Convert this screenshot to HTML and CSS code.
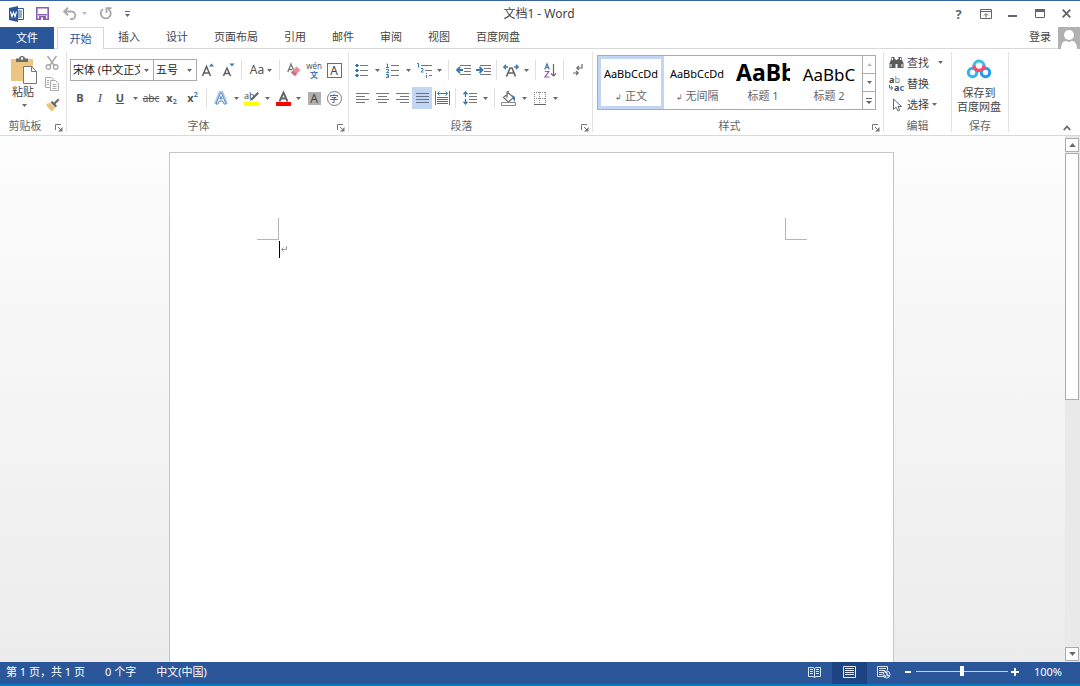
FILE: index.html
```html
<!DOCTYPE html>
<html lang="zh-CN">
<head>
<meta charset="utf-8">
<title>文档1 - Word</title>
<link rel="stylesheet" href="styles.css">
</head>
<body>
<svg class="defs" aria-hidden="true">
  <symbol id="caret" viewBox="0 0 5 3"><path d="M0 0h5L2.500 3z" fill="#6a6a6a"/></symbol>
  <symbol id="launcher" viewBox="0 0 8 8"><path d="M.5 6V.5H6M3 3l3 3" fill="none" stroke="#777"/><path d="M7.500 3v4.500H3z" fill="#777"/></symbol>
</svg>
<div class="app">
  <header class="titlebar">
    <div class="quick">
      <svg width="16" height="16" viewBox="0 0 16 16"><path d="M8 2.500h6.500v11H8z" fill="#fff" stroke="#2b579a"/><path d="M9 5h4M9 7h4M9 9h4M9 11h4" stroke="#2b579a"/><path d="M0 2l9-2v16l-9-2z" fill="#2b579a"/><path d="M1.500 5.500L3 10.500l1.500-4 1.500 4 1.500-5" fill="none" stroke="#fff" stroke-width="1.200"/></svg>
      <button class="qbtn save" aria-label="保存"><svg width="13" height="13" viewBox="0 0 13 13"><path d="M.8.8h11.400v11.400H.8z" fill="#fff" stroke="#8a5bb0" stroke-width="1.600"/><path d="M2 7h9v1.500H2zM3 9h7v4H3z" fill="#8a5bb0"/><path d="M5 10.500h2V13H5z" fill="#fff"/></svg></button>
      <button class="qbtn undo" aria-label="撤消"><svg width="14" height="13" viewBox="0 0 14 13"><path d="M1 4.500h7.500a3.800 3.800 0 0 1 0 7.600H7M5 .8L1.200 4.500 5 8.200" fill="none" stroke="#aaa" stroke-width="1.900"/></svg></button>
      <button class="qbtn drop dim" aria-label="撤消选项"><svg class="caret"><use href="#caret"/></svg></button>
      <button class="qbtn redo" aria-label="重复"><svg width="13" height="13" viewBox="0 0 13 13"><path d="M4 2.200A5 5 0 1 0 9.200 2M7.500 6V1.200h5" fill="none" stroke="#a6a6a6" stroke-width="1.800"/></svg></button>
      <button class="qbtn more" aria-label="自定义快速访问工具栏"><svg width="5" height="6" viewBox="0 0 5 6"><path d="M0 .5h5" stroke="#666"/><path d="M0 3h5L2.500 6z" fill="#666"/></svg></button>
    </div>
    <h1 class="doc-title">文档1 - Word</h1>
    <div class="window-controls">
      <button aria-label="帮助" class="help">?</button>
      <button aria-label="功能区显示选项"><svg width="12" height="10" viewBox="0 0 12 10"><path d="M.5.5h11v9H.5zM0 2.500h12M6 8.500V5M4 6.500l2-2 2 2" fill="none" stroke="#666"/></svg></button>
      <button aria-label="最小化"><svg width="9" height="10" viewBox="0 0 9 10"><path d="M0 7h9" stroke="#666" stroke-width="2"/></svg></button>
      <button aria-label="最大化"><svg width="10" height="9" viewBox="0 0 10 9"><path d="M.5.5h9v8h-9z" fill="none" stroke="#666"/><path d="M0 1.500h10" stroke="#666" stroke-width="3"/></svg></button>
      <button aria-label="关闭"><svg width="9" height="9" viewBox="0 0 9 9"><path d="M.7.7l7.600 7.600M8.300.7L.7 8.300" stroke="#666" stroke-width="1.900"/></svg></button>
    </div>
  </header>

  <nav class="tabs">
    <button class="tab file">文件</button>
    <button class="tab active">开始</button>
    <button class="tab">插入</button>
    <button class="tab">设计</button>
    <button class="tab">页面布局</button>
    <button class="tab">引用</button>
    <button class="tab">邮件</button>
    <button class="tab">审阅</button>
    <button class="tab">视图</button>
    <button class="tab">百度网盘</button>
    <a class="login" href="#">登录</a>
    <svg class="avatar" width="22" height="22" viewBox="0 0 22 22"><path d="M0 0h22v22H0z" fill="#b1b1b1"/><circle cx="11" cy="8" r="5" fill="#fff"/><path d="M3 22c0-5 2-8 5-8l3 1 3-1c3 0 5 3 5 8z" fill="#fff"/></svg>
  </nav>

  <section class="ribbon">
    <div class="group clipboard">
      <div class="clip-body">
        <button class="paste"><svg width="28" height="28" viewBox="0 0 28 28"><path d="M1 3h22v22H1z" fill="#ecc583"/><path d="M6 6V2.500h3C9 1 10 0 12 0s3 1 3 2.500h3V6z" fill="#6b6b6b"/><circle cx="12" cy="2.500" r="1.200" fill="#fff"/><path d="M13.500 10.500h8l5 5v12h-13z" fill="#fff" stroke="#777"/><path d="M21.500 10.500v5h5" fill="none" stroke="#777"/></svg><span>粘贴</span><svg class="caret"><use href="#caret"/></svg></button>
        <div class="clip-tools">
          <button class="tool" aria-label="剪切"><svg width="14" height="14" viewBox="0 0 14 14"><path d="M2.500 0l6.800 9.500M11.500 0L4.700 9.500" stroke="#aaa" stroke-width="1.500"/><g fill="none" stroke="#aaa" stroke-width="1.400"><circle cx="3.300" cy="11" r="2.200"/><circle cx="10.700" cy="11" r="2.200"/></g></svg></button>
          <button class="tool" aria-label="复制"><svg width="14" height="14" viewBox="0 0 14 14"><g fill="#fff" stroke="#aaa"><path d="M.5.5h6l2 2v8h-8z"/><path d="M5.500 3.500h5l3 3v7h-8z"/></g><path d="M2 3.500h2M2 5.500h2M2 7.500h2M7.500 7.500h4M7.500 9.500h4M7.500 11.500h4" stroke="#aaa"/></svg></button>
          <button class="tool" aria-label="格式刷"><svg width="15" height="14" viewBox="0 0 15 14"><path d="M1 6l4-1 5 5-3 3.500C5 12 2 9 1 6z" fill="#efc27a"/><path d="M5.500 4.500l5 5 1.500-1.500-1.500-2L14.500 2 13 .5 9 4.500 7 3z" fill="#6b6b6b"/></svg></button>
        </div>
      </div>
      <div class="caption"><span>剪贴板</span><button class="launch" aria-label="剪贴板选项"><svg width="8" height="8"><use href="#launcher"/></svg></button></div>
    </div>

    <div class="group font">
      <div class="row">
        <label class="combo name"><select aria-label="字体"><option>宋体 (中文正文)</option></select><span class="arrow"><svg class="caret"><use href="#caret"/></svg></span></label>
        <label class="combo size"><select aria-label="字号"><option>五号</option></select><span class="arrow"><svg class="caret"><use href="#caret"/></svg></span></label>
        <button class="tool glyph" aria-label="增大字号"><svg width="14" height="14" viewBox="0 0 14 14"><path d="M1.500 13L5.500 3.500 9.500 13M3 10h5" fill="none" stroke="#606060" stroke-width="1.500"/><path d="M8 3.500L10.500.5 13 3.500z" fill="#3a78b5"/></svg></button>
        <button class="tool glyph" aria-label="减小字号"><svg width="14" height="14" viewBox="0 0 14 14"><path d="M2.500 13L6 5l3.500 8M4 10.500h4" fill="none" stroke="#606060" stroke-width="1.500"/><path d="M8.500.5h5L11 3.500z" fill="#3a78b5"/></svg></button>
        <i class="sep"></i>
        <button class="tool case">Aa<svg class="caret"><use href="#caret"/></svg></button>
        <i class="sep"></i>
        <button class="tool" aria-label="清除格式"><svg width="14" height="14" viewBox="0 0 14 14"><path d="M.8 9L4 1l2.500 6M2 6.500h3" fill="none" stroke="#777" stroke-width="1.300"/><path d="M9.500 3.500l4 3.500-5.500 6-4-3.500z" fill="#e58f9e"/><path d="M4 9.500l2-2 4 3.500-2 2z" fill="#d9667d"/></svg></button>
        <button class="tool pinyin" aria-label="拼音指南"><span>wén</span><b>文</b></button>
        <button class="tool" aria-label="字符边框"><span class="boxed">A</span></button>
      </div>
      <div class="row">
        <button class="tool bold">B</button><button class="tool italic">I</button><button class="tool under">U</button><button class="drop" aria-label="下划线选项"><svg class="caret"><use href="#caret"/></svg></button>
        <button class="tool strike">abc</button><button class="tool script">x<sub>2</sub></button><button class="tool script">x<sup>2</sup></button>
        <i class="sep"></i>
        <button class="tool" aria-label="文本效果"><svg width="14" height="14" viewBox="0 0 14 14"><path d="M1.500 13L6 1.500h2L12.500 13M4 9h6" fill="none" stroke="#a9c8e8" stroke-width="3"/><path d="M2 13L6.500 2h1L12 13h-2L8.700 10H5.300L4 13zM5.900 8h2.200L7 5.300z" fill="#fff" stroke="#4682bd" stroke-width=".9"/></svg></button><button class="drop" aria-label="文本效果选项"><svg class="caret"><use href="#caret"/></svg></button>
        <button class="tool" aria-label="突出显示"><svg width="16" height="15" viewBox="0 0 16 15"><path d="M0 11h15v4H0z" fill="#ff0"/><text x="0" y="8" class="tiny-ab">ab</text><path d="M13.500 1l1.500 1.500L8.500 9 6 10l1-2.500z" fill="#666"/></svg></button><button class="drop" aria-label="突出显示选项"><svg class="caret"><use href="#caret"/></svg></button>
        <button class="tool" aria-label="字体颜色"><svg width="15" height="15" viewBox="0 0 15 15"><path d="M0 11h15v4H0z" fill="#f00"/><path d="M3.500 10.500L7.500 1.500l4 9M5 7.500h5" fill="none" stroke="#666" stroke-width="1.900"/></svg></button><button class="drop" aria-label="字体颜色选项"><svg class="caret"><use href="#caret"/></svg></button>
        <button class="tool" aria-label="字符底纹"><span class="shaded">A</span></button>
        <button class="tool" aria-label="带圈字符"><span class="ringed">字</span></button>
      </div>
      <div class="caption"><span>字体</span><button class="launch" aria-label="字体选项"><svg width="8" height="8"><use href="#launcher"/></svg></button></div>
    </div>

    <div class="group para">
      <div class="row">
        <button class="tool" aria-label="项目符号"><svg width="14" height="14" viewBox="0 0 14 14"><path d="M5 2.500h8M5 7.500h8M5 12.500h8" stroke="#777"/><path d="M1 1h2v3H1zM1 6h2v3H1zM1 11h2v3H1zM0 2h4v1H0zM0 7h4v1H0zM0 12h4v1H0z" fill="#3a78b5"/></svg></button><button class="drop" aria-label="项目符号选项"><svg class="caret"><use href="#caret"/></svg></button>
        <button class="tool" aria-label="编号"><svg width="14" height="15" viewBox="0 0 14 15"><path d="M5 2.500h8M5 7.500h8M5 12.500h8" stroke="#777"/><path d="M.5 1h1v3M0 4.500h3M0 6.500h2.500V8L.5 9.500H3M0 11.500h2.500v3H0M1 13h1.500" fill="none" stroke="#3a78b5"/></svg></button><button class="drop" aria-label="编号选项"><svg class="caret"><use href="#caret"/></svg></button>
        <button class="tool" aria-label="多级列表"><svg width="15" height="15" viewBox="0 0 15 15"><path d="M4 2.500h11M8 7.500h7M12 12.500h3" stroke="#777"/><path d="M0 .5h1.500v4M4 5.500h2v1.500L4 9h2.500M9.500 10v1M9.500 12v3" fill="none" stroke="#3a78b5"/></svg></button><button class="drop" aria-label="多级列表选项"><svg class="caret"><use href="#caret"/></svg></button>
        <i class="sep"></i>
        <button class="tool" aria-label="减少缩进量"><svg width="15" height="10" viewBox="0 0 15 10"><path d="M4 .5h11M8 3.500h7M8 6.500h7M4 9.500h11" stroke="#777"/><path d="M7 5H1.500M4 2L1 5l3 3" fill="none" stroke="#3a78b5" stroke-width="1.800"/></svg></button>
        <button class="tool" aria-label="增加缩进量"><svg width="15" height="10" viewBox="0 0 15 10"><path d="M4 .5h11M8 3.500h7M8 6.500h7M4 9.500h11" stroke="#777"/><path d="M0 5h6M3.500 2l3 3-3 3" fill="none" stroke="#3a78b5" stroke-width="1.800"/></svg></button>
        <i class="sep"></i>
        <button class="tool" aria-label="中文版式"><svg width="16" height="13" viewBox="0 0 16 13"><path d="M3.500 12.500L7 4h2l3.500 8.500M5 9h6" fill="none" stroke="#666" stroke-width="1.700"/><path d="M1 3h4M11 3h4M3 .8L.8 3 3 5.200M13 .8L15.200 3 13 5.200" fill="none" stroke="#3a78b5" stroke-width="1.300"/></svg></button><button class="drop" aria-label="中文版式选项"><svg class="caret"><use href="#caret"/></svg></button>
        <i class="sep"></i>
        <button class="tool" aria-label="排序"><svg width="13" height="15" viewBox="0 0 13 15"><path d="M.8 6.500L3 .8l2.200 5.700M1.500 4.500h3" fill="none" stroke="#3a78b5" stroke-width="1.200"/><path d="M.8 8.500h4L1 14h4.500" fill="none" stroke="#8a5bb0" stroke-width="1.200"/><path d="M9.500 1v12M7 10.500L9.500 13l2.500-2.500" fill="none" stroke="#666" stroke-width="1.200"/></svg></button>
        <i class="sep"></i>
        <button class="tool" aria-label="显示编辑标记"><svg width="10" height="12" viewBox="0 0 10 12"><path d="M9 0v4H4M6 1.800L3.800 4 6 6.200M0 9h5M3 6.800L5.200 9 3 11.200" fill="none" stroke="#666" stroke-width="1.200"/></svg></button>
      </div>
      <div class="row">
        <button class="tool" aria-label="左对齐"><svg width="13" height="10" viewBox="0 0 13 10"><path d="M0 .5h13M0 3.500h9M0 6.500h13M0 9.500h9" stroke="#777"/></svg></button>
        <button class="tool" aria-label="居中"><svg width="13" height="10" viewBox="0 0 13 10"><path d="M0 .5h13M2 3.500h9M0 6.500h13M2 9.500h9" stroke="#777"/></svg></button>
        <button class="tool" aria-label="右对齐"><svg width="13" height="10" viewBox="0 0 13 10"><path d="M0 .5h13M4 3.500h9M0 6.500h13M4 9.500h9" stroke="#777"/></svg></button>
        <button class="tool on" aria-label="两端对齐"><svg width="13" height="10" viewBox="0 0 13 10"><path d="M0 .5h13M0 3.500h13M0 6.500h13M0 9.500h13" stroke="#677187"/></svg></button>
        <button class="tool" aria-label="分散对齐"><svg width="15" height="14" viewBox="0 0 15 14"><path d="M.5 0v14M14.500 0v14M2.500 2.500h10M4.500.5l-2 2 2 2M10.500.5l2 2-2 2" fill="none" stroke="#3a78b5"/><path d="M2 6.500h11M2 8.500h11M2 10.500h11M2 12.500h11" stroke="#666"/></svg></button>
        <i class="sep"></i>
        <button class="tool" aria-label="行距"><svg width="14" height="14" viewBox="0 0 14 14"><path d="M6 2.500h8M6 5.500h8M6 8.500h8M6 11.500h8" stroke="#777"/><path d="M2.500 1v5M2.500 8v5M.5 3.200l2-2.200 2 2.200M.5 10.800l2 2.200 2-2.200" fill="none" stroke="#3a78b5" stroke-width="1.300"/></svg></button><button class="drop" aria-label="行距选项"><svg class="caret"><use href="#caret"/></svg></button>
        <i class="sep"></i>
        <button class="tool" aria-label="底纹"><svg width="16" height="15" viewBox="0 0 16 15"><path d="M2.500 6.500l5-4.500 5 4.500L7.500 11zM6 7V1.500q0-1 1-1h1" fill="#fff" stroke="#666" stroke-width="1.100"/><path d="M11 4l3 2v5l-2-3z" fill="#3a78b5"/><path d="M.5 11.500h14v3H.5z" fill="#fff" stroke="#888"/></svg></button><button class="drop" aria-label="底纹选项"><svg class="caret"><use href="#caret"/></svg></button>
        <button class="tool" aria-label="边框"><svg width="12" height="13" viewBox="0 0 12 13"><path d="M.5 0v12M11.500 0v12M5.500 0v12M0 .5h12M0 6.500h12" stroke="#888" stroke-dasharray="1 1"/><path d="M0 12.500h12" stroke="#666"/></svg></button><button class="drop" aria-label="边框选项"><svg class="caret"><use href="#caret"/></svg></button>
      </div>
      <div class="caption"><span>段落</span><button class="launch" aria-label="段落选项"><svg width="8" height="8"><use href="#launcher"/></svg></button></div>
    </div>

    <div class="group styles">
      <div class="gallery">
        <button class="style chosen"><span class="sample">AaBbCcDd</span><span class="sname"><small>↲</small> 正文</span></button>
        <button class="style"><span class="sample">AaBbCcDd</span><span class="sname"><small>↲</small> 无间隔</span></button>
        <button class="style"><span class="sample h1">AaBb</span><span class="sname">标题 1</span></button>
        <button class="style"><span class="sample h2">AaBbC</span><span class="sname">标题 2</span></button>
        <div class="gallery-nav">
          <button aria-label="上一行" class="dim"><svg class="caret flip"><use href="#caret"/></svg></button>
          <button aria-label="下一行"><svg class="caret"><use href="#caret"/></svg></button>
          <button aria-label="其他"><svg width="6" height="6" viewBox="0 0 6 6"><path d="M0 .5h6" stroke="#666"/><path d="M0 3h6L3 6z" fill="#666"/></svg></button>
        </div>
      </div>
      <div class="caption"><span>样式</span><button class="launch" aria-label="样式选项"><svg width="8" height="8"><use href="#launcher"/></svg></button></div>
    </div>

    <div class="group edit">
      <div class="edit-list">
        <button><svg width="14" height="13" viewBox="0 0 14 13"><path d="M2 1h3v2h1v9H0V7l2-4zM9 1h3v2l2 4v5H8V3h1zM6 4h2v4H6z" fill="#5c5c5c"/><path d="M1.500 8v3M12.500 8v3M3 2v2M11 2v2" stroke="#fff"/></svg><span>查找</span><svg class="caret far"><use href="#caret"/></svg></button>
        <button><svg width="15" height="16" viewBox="0 0 15 16"><text x="0" y="7" class="rep"><tspan class="dark">a</tspan>b</text><text x="5" y="15" class="rep"><tspan class="dark">a</tspan><tspan class="blue">c</tspan></text><path d="M.5 9v3h3M2 10l1.500 2L2 14" fill="none" stroke="#3a78b5"/></svg><span>替换</span></button>
        <button><svg width="14" height="14" viewBox="0 0 14 14"><path d="M4 1v10.500l2.500-2.300L8.500 13l1.700-.8L8.500 8.500H12z" fill="#fff" stroke="#666"/></svg><span>选择</span><svg class="caret"><use href="#caret"/></svg></button>
      </div>
      <div class="caption"><span>编辑</span></div>
    </div>

    <div class="group cloud">
      <button class="cloud-btn"><svg width="26" height="20" viewBox="0 0 26 20"><g fill="none" stroke-width="3"><circle cx="6.500" cy="13.500" r="4.200" stroke="#2bb5ee"/><circle cx="19.500" cy="13.500" r="4.200" stroke="#1f9cf0"/><path d="M8 7a5 5 0 1 1 10 0" stroke="#36bdf2"/><path d="M8 6.500a5 5 0 0 0 10 0" stroke="#f2506e" stroke-width="3.600"/></g></svg><span>保存到<br>百度网盘</span></button>
      <div class="caption"><span>保存</span></div>
    </div>
    <button class="collapse" aria-label="折叠功能区"><svg width="8" height="6" viewBox="0 0 8 6"><path d="M.8 5L4 1.500 7.200 5" fill="none" stroke="#666" stroke-width="1.800"/></svg></button>
  </section>

  <main class="workspace">
    <div class="canvas">
      <article class="page">
        <div class="corners"><i class="corner left"></i><i class="corner right"></i></div>
        <div class="line"><i class="cursor"></i><svg width="7" height="8" viewBox="0 0 7 8"><path d="M6.500 0v3.500H1.500M3.500 1.500l-2 2 2 2" fill="none" stroke="#999"/></svg></div>
      </article>
    </div>
    <div class="scrollbar">
      <button aria-label="向上滚动"><svg class="caret flip big"><use href="#caret"/></svg></button>
      <div class="track"><div class="thumb"></div></div>
      <button aria-label="向下滚动"><svg class="caret big"><use href="#caret"/></svg></button>
    </div>
  </main>

  <footer class="status">
    <span>第 1 页，共 1 页</span><span>0 个字</span><span>中文(中国)</span>
    <div class="views">
      <button aria-label="阅读视图"><svg width="13" height="12" viewBox="0 0 13 12"><path d="M.5 1.500h4.500l1.500 1 1.500-1h4.500v9H8l-1.500 1-1.500-1H.5zM6.500 2v9M2 3.500h3M2 5.500h3M2 7.500h3M8 3.500h3M8 5.500h3M8 7.500h3" fill="none" stroke="#dbe4f1"/></svg></button>
      <button class="current" aria-label="页面视图"><svg width="13" height="12" viewBox="0 0 13 12"><path d="M.5.5h12v11H.5zM2 2.500h9M2 4.500h9M2 6.500h9M2 8.500h9" fill="none" stroke="#e6ecf5"/></svg></button>
      <button aria-label="Web 版式视图"><svg width="14" height="13" viewBox="0 0 14 13"><path d="M6 10.500H.5V.5h10v4M2 2.500h7M2 4.500h6M2 6.500h4M2 8.500h3" fill="none" stroke="#dbe4f1"/><circle cx="9.500" cy="8.500" r="3.500" fill="#2b579a" stroke="#dbe4f1"/><path d="M8 6l2 1v2l2 1M7 9l2 2" fill="none" stroke="#dbe4f1" stroke-width="1.400"/></svg></button>
    </div>
    <button class="zoom-step" aria-label="缩小"><svg width="7" height="8" viewBox="0 0 7 8"><path d="M0 4h6" stroke="#fff" stroke-width="2"/></svg></button>
    <input class="zoom" type="range" min="0" max="100" value="50" aria-label="缩放">
    <button class="zoom-step" aria-label="放大"><svg width="8" height="8" viewBox="0 0 8 8"><path d="M0 4h8M4 0v8" stroke="#fff" stroke-width="2"/></svg></button>
    <button class="percent">100%</button>
  </footer>
</div>
</body>
</html>
```
FILE: styles.css
```css
* { box-sizing: border-box; }
body {
  margin: 0;
  font: 11px/16px "Noto Sans", "Noto Sans CJK SC", sans-serif;
  color: #444;
  background: #fff;
}
button, select {
  margin: 0;
  padding: 0;
  border: 0;
  background: none;
  font: inherit;
  color: inherit;
}
button { display: flex; align-items: center; justify-content: center; white-space: nowrap; }
svg { display: block; flex: none; overflow: visible; }
.defs { position: absolute; width: 0; height: 0; }
.caret { width: 5px; height: 3px; }
.caret.big { width: 7px; height: 4px; }
.flip { transform: rotate(180deg); }
.dim { opacity: .45; }
.app { display: flex; flex-direction: column; height: 100vh; overflow: hidden; }

.titlebar {
  display: grid;
  grid-template-columns: 1fr auto 1fr;
  align-items: center;
  height: 27px;
  padding-bottom: 1px;
  border-top: 1px solid #3a63a5;
}
.quick { display: flex; align-items: center; padding-left: 9px; }
.qbtn { height: 20px; }
.save { margin-left: 11px; }
.undo { margin-left: 14px; }
.quick .drop { width: 12px; margin-left: 1px; }
.redo { margin-left: 9px; }
.more { margin-left: 13px; }
.doc-title { margin: 0; padding-right: 2px; font-size: 12px; font-weight: 400; }
.window-controls { display: flex; justify-content: flex-end; }
.window-controls button { width: 27px; height: 24px; }
.window-controls .help { font-size: 13px; font-weight: 700; color: #666; }

.tabs { display: flex; height: 22px; border-bottom: 1px solid #dadada; }
.tab { padding: 0 13px; height: 20px; }
.file { width: 54px; height: 22px; background: #2b579a; color: #fff; }
.active {
  width: 47px;
  height: 22px;
  margin: 0 1px 0 3px;
  padding: 0;
  border: 1px solid #d5d5d5;
  border-bottom: 0;
  background: #fff;
  color: #2b579a;
}
.login { margin-left: auto; margin-right: 7px; line-height: 19px; color: #444; text-decoration: none; }

.ribbon { display: flex; height: 87px; border-bottom: 1px solid #d9d9d9; }
.group {
  position: relative;
  display: flex;
  flex-direction: column;
  margin: 3px 0;
  border-right: 1px solid #e3e3e3;
}
.caption {
  display: flex;
  justify-content: center;
  margin-top: auto;
  line-height: 13px;
  color: #666;
}
.launch { position: absolute; right: 3px; bottom: -1px; width: 9px; height: 10px; }
.tool { width: 20px; height: 22px; color: #555; }
.drop { width: 11px; height: 22px; }
.row { display: flex; align-items: center; height: 22px; }
.row + .row { margin-top: 6px; }
.sep { width: 1px; height: 20px; margin: 0 4px 0 3px; background: #e1e1e1; }
.on { background: #c2d5f2; }

.clipboard { width: 67px; }
.clip-body { display: flex; align-items: flex-start; }
.paste { flex-direction: column; width: 40px; margin-left: 4px; padding: 4px 0 0; color: #444; }
.paste span { margin: 0 2px 4px 0; }
.clip-tools { display: flex; flex-direction: column; margin-left: -2px; }
.clip-tools .tool { height: 21px; }
.clipboard .caption { padding-right: 16px; }

.font { width: 282px; padding-left: 3px; }
.font .row:first-child, .para .row:first-child { margin-top: 7px; }
.font .caption, .para .caption { padding-right: 21px; }
.combo { position: relative; display: flex; height: 22px; border: 1px solid #ababab; }
.combo.name { width: 84px; }
.combo.size { width: 44px; margin: 0 1px 0 -1px; }
.combo select { flex: 1; min-width: 0; padding-left: 2px; appearance: none; color: #222; }
.arrow {
  position: absolute;
  top: 0;
  right: 0;
  display: flex;
  align-items: center;
  justify-content: center;
  width: 13px;
  height: 100%;
  background: #fff;
  pointer-events: none;
}
.case { width: 30px; gap: 3px; font-size: 12px; }
.pinyin { flex-direction: column; font-size: 8px; line-height: 9px; }
.pinyin b { font-size: 8px; color: #3a78b5; }
.boxed, .shaded, .ringed { display: block; text-align: center; color: #444; }
.boxed { width: 15px; height: 15px; border: 1px solid #3a78b5; font-size: 12px; line-height: 13px; }
.shaded { width: 13px; height: 13px; background: #b0b0b0; font-size: 12px; line-height: 13px; }
.ringed { width: 15px; height: 15px; border: 1px solid #777; border-radius: 50%; font-size: 9px; line-height: 13px; }
.bold { font-weight: 700; }
.italic { font: italic 13px "Liberation Serif", serif; }
.under { font-weight: 700; text-decoration: underline; }
.strike { font-size: 10px; text-decoration: line-through; }
.script { width: 21px; font-weight: 700; }
.script sub, .script sup { font-size: 7px; line-height: 7px; color: #3a78b5; }
.script sub { align-self: flex-end; padding-bottom: 4px; }
.script sup { align-self: flex-start; padding-top: 4px; }
.tiny-ab { font-size: 9px; fill: #555; }

.para { width: 244px; padding-left: 3px; }

.styles { width: 291px; padding: 3px 7px 0 4px; }
.styles .caption { padding-right: 14px; }
.gallery { display: flex; height: 55px; border: 1px solid #ababab; }
.style {
  flex: 1;
  min-width: 0;
  flex-direction: column;
  justify-content: flex-start;
  overflow: hidden;
  border: 3px solid transparent;
}
.chosen { border-color: #c2d5f2; }
.sample { height: 29px; font-size: 11px; line-height: 30px; color: #000; }
.h1 { width: 54px; overflow: hidden; font-size: 23px; font-weight: 700; line-height: 27px; text-align: left; }
.h2 { font-size: 17px; line-height: 31px; }
.sname { color: #666; }
.sname small { font-size: 8px; }
.gallery-nav { display: flex; flex-direction: column; width: 13px; border-left: 1px solid #ababab; }
.gallery-nav button { flex: 1; }
.gallery-nav button + button { border-top: 1px solid #ababab; }

.edit { width: 68px; }
.edit-list { display: flex; flex-direction: column; padding-left: 5px; }
.edit-list button { justify-content: flex-start; height: 21px; gap: 3px; }
.edit-list svg:first-child { width: 15px; }
.edit-list .far { margin-left: 6px; }
.rep { font: 9px "Noto Sans", sans-serif; fill: #888; }
.dark { fill: #444; font-weight: 700; }
.blue { fill: #3a78b5; font-weight: 700; }

.cloud { width: 57px; }
.cloud-btn { flex-direction: column; padding: 7px 2px 0 0; line-height: 14px; gap: 7px; }
.collapse { align-self: flex-end; margin-left: auto; width: 27px; height: 14px; }

.workspace { flex: 1; display: flex; min-height: 0; background: linear-gradient(#fdfdfd, #ececec); }
.canvas { flex: 1; display: flex; justify-content: center; padding: 16px 18px 0 16px; }
.page {
  flex: 0 1 725px;
  padding: 65px 86px 0 87px;
  border: 1px solid #c6c6c6;
  border-bottom: 0;
  background: #fff;
}
.corners { display: flex; justify-content: space-between; }
.corner { width: 22px; height: 22px; border: 0 solid #b5b5b5; border-bottom-width: 1px; }
.corner.left { border-right-width: 1px; }
.corner.right { border-left-width: 1px; }
.line { display: flex; align-items: center; padding: 1px 0 0 22px; }
.cursor { width: 1px; height: 17px; background: #000; }

.scrollbar { display: flex; flex-direction: column; width: 15px; padding: 2px 1px 1px 0; background: #e9e9e9; }
.scrollbar button { height: 14px; border: 1px solid #ababab; background: #fff; }
.track { flex: 1; padding: 1px 0; }
.thumb { height: 50%; border: 1px solid #ababab; background: #fff; }

.status {
  display: flex;
  align-items: center;
  height: 24px;
  padding: 0 18px 3px 6px;
  border-bottom: 2px solid #0a78be;
  background: #2b579a;
  color: #fff;
}
.status > span { margin-right: 20px; }
.views { display: flex; margin-left: auto; align-self: stretch; margin-bottom: -3px; }
.views button { width: 35px; padding-bottom: 2px; }
.views .current { background: #1c4482; }
.zoom-step { width: 14px; height: 16px; }
.zoom { width: 92px; height: 16px; margin: 0; appearance: none; background: none; }
.zoom::-webkit-slider-runnable-track { height: 1px; background: #c5d2e6; }
.zoom::-webkit-slider-thumb { appearance: none; width: 4px; height: 10px; margin-top: -5px; background: #fff; }
.percent { margin-left: 12px; }
```
